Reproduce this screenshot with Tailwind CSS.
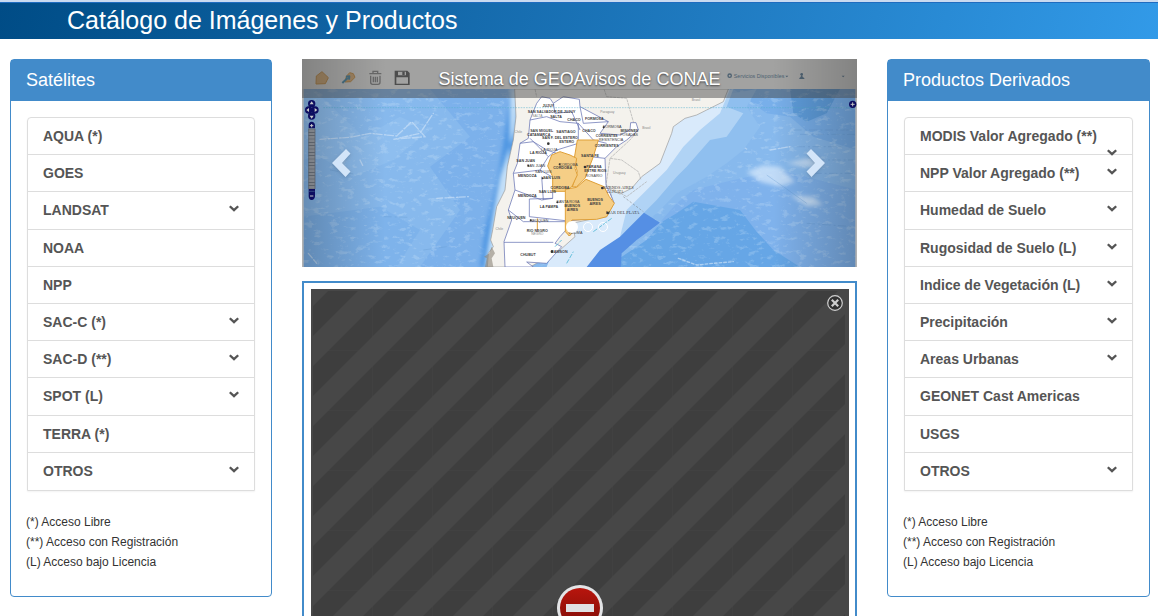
<!DOCTYPE html>
<html lang="es">
<head>
<meta charset="utf-8">
<meta name="viewport" content="width=device-width, initial-scale=1">
<title>Catálogo de Imágenes y Productos</title>
<script src="https://cdn.jsdelivr.net/npm/@tailwindcss/browser@4"></script>
</head>
<body class="h-screen overflow-hidden bg-white font-['Liberation_Sans',Arial,sans-serif] text-[#333]">
<svg class="hidden" aria-hidden="true">
  <symbol id="chev" viewBox="0 0 10 7"><path d="M1.6 0.4 5 3.4 8.4 0.4 10 2 5 6.8 0 2Z" fill="currentColor"/></symbol>
</svg>

<header class="border-t-2 border-[#c9daf0] bg-linear-105 from-[#004c86] to-[#329ae8]">
  <h1 class="border-t border-[#1f6cc0] pb-[2px] pl-[67px] text-[25px] leading-[34px] text-white">Catálogo de Imágenes y Productos</h1>
</header>

<main class="grid grid-cols-[262fr_555fr_263fr] items-start gap-[30px] pt-5 pr-2 pl-[10px]">

  <section class="rounded border border-[#428bca] bg-white">
    <h2 class="bg-[#428bca] px-[15px] pt-[10px] pb-[11px] text-lg leading-5 text-white">Satélites</h2>
    <div class="px-4 pt-4 pb-6">
      <ul class="grid min-h-[374px] auto-rows-fr divide-y divide-[#ddd] rounded-t border border-[#ddd] text-sm font-bold text-[#555] shadow-xs">
        <li class="flex items-center px-[15px]"><a href="#" class="h-[18px] flex-1 leading-[18px]">AQUA (*)</a></li>
        <li class="flex items-center px-[15px]"><a href="#" class="h-[18px] flex-1 leading-[18px]">GOES</a></li>
        <li class="flex items-center px-[15px]"><a href="#" class="h-[18px] flex-1 leading-[18px]">LANDSAT <svg class="float-right mt-1 ml-4 h-[7px] w-[10px]"><use href="#chev"/></svg></a></li>
        <li class="flex items-center px-[15px]"><a href="#" class="h-[18px] flex-1 leading-[18px]">NOAA</a></li>
        <li class="flex items-center px-[15px]"><a href="#" class="h-[18px] flex-1 leading-[18px]">NPP</a></li>
        <li class="flex items-center px-[15px]"><a href="#" class="h-[18px] flex-1 leading-[18px]">SAC-C (*) <svg class="float-right mt-1 ml-4 h-[7px] w-[10px]"><use href="#chev"/></svg></a></li>
        <li class="flex items-center px-[15px]"><a href="#" class="h-[18px] flex-1 leading-[18px]">SAC-D (**) <svg class="float-right mt-1 ml-4 h-[7px] w-[10px]"><use href="#chev"/></svg></a></li>
        <li class="flex items-center px-[15px]"><a href="#" class="h-[18px] flex-1 leading-[18px]">SPOT (L) <svg class="float-right mt-1 ml-4 h-[7px] w-[10px]"><use href="#chev"/></svg></a></li>
        <li class="flex items-center px-[15px]"><a href="#" class="h-[18px] flex-1 leading-[18px]">TERRA (*)</a></li>
        <li class="flex items-center px-[15px]"><a href="#" class="h-[18px] flex-1 leading-[18px]">OTROS <svg class="float-right mt-1 ml-4 h-[7px] w-[10px]"><use href="#chev"/></svg></a></li>
      </ul>
      <div class="-ml-px pt-[21px] text-xs leading-5">
        <p>(*) Acceso Libre</p>
        <p>(**) Acceso con Registración</p>
        <p>(L) Acceso bajo Licencia</p>
      </div>
    </div>
  </section>

  <div class="flex flex-col gap-[14px]">
    <section class="relative" aria-label="Carrusel">
      <svg class="block w-full" viewBox="-534 27 1665 624" font-family="Liberation Sans, Arial, sans-serif">
        <defs>
          <linearGradient id="shL"><stop offset="0" stop-opacity=".24"/><stop offset="1" stop-opacity="0"/></linearGradient>
          <linearGradient id="shR"><stop offset="0" stop-opacity="0"/><stop offset="1" stop-opacity=".24"/></linearGradient>
          <filter id="soft" x="-10%" y="-10%" width="120%" height="120%"><feGaussianBlur stdDeviation="7"/></filter>
          <filter id="rough" x="0" y="0" width="100%" height="100%"><feTurbulence type="fractalNoise" baseFrequency=".04 .07" numOctaves="4" seed="8"/><feColorMatrix values="0 0 0 0 .72  0 0 0 0 .86  0 0 0 0 .98  6 0 0 0 -3.4"/></filter>
        </defs>
        <rect x="-534" y="27" width="1665" height="624" fill="#87b9ed"/>
        <!-- sea depth bands -->
        <path d="M-150 117H160L90 340 30 651H-180L-60 480-150 350-30 260Z" fill="#7cb1eb"/>
        <path d="M-534 500-300 470-180 540-250 651H-534Z" fill="#7eb3eb"/>
        <path d="M-500 117-350 260-240 200-150 240-260 330-380 380-480 320-534 330V117Z" fill="#8ebeef"/>
        <path d="M760 117H1131V300L1000 260 930 200 860 190Z" fill="#78afea"/>
        <path d="M930 117H1080L1040 190 980 215 940 190Z" fill="#5f9edd"/>
        <path d="M440 651 520 540 590 460 640 420 760 390 900 360 1131 420V651Z" fill="#7fb2ec"/>
        <path d="M380 651 500 570 545 516 590 490 640 455 780 480 830 545 880 600 960 651Z" fill="#66a6e6"/>
        <rect x="-534" y="117" width="1665" height="534" filter="url(#rough)" opacity=".22"/>
        <g fill="#cfe4fa" filter="url(#soft)" opacity=".8"><path d="M800 365 850 345 900 350 945 395 900 410 840 395Z"/><path d="M920 340 980 325 1040 345 970 350Z"/><path d="M930 435 1000 440 1030 465 980 470Z"/></g>
        <g fill="none" stroke="#c5def7" stroke-linecap="round" stroke-width="4" opacity=".75">
          <path d="M-480 268-390 262-330 250-250 258-205 215-165 260-260 268-180 250-140 190M-130 445-35 440M770 280 800 297M870 300 930 290M-515 610-490 640M-360 330-350 350" stroke-dasharray="18 7 5 4"/>
          <path d="M595 625 650 645 700 640 760 635" stroke-dasharray="8 6"/>
        </g>
        <g fill="none" stroke="#5d92ca" stroke-width="1.5" opacity=".6"><path d="M940 240H1120M960 253H1125M950 290H1090M1010 330H1120M1000 370H1120M980 520 1120 530M-290 500-210 502M-170 600-100 590M-450 360-380 372" stroke-dasharray="25 9 6 7"/><path d="M860 375 910 410 980 460"/></g>
        <!-- pacific and atlantic shelves -->
        <path d="M95 117 70 280 55 380 40 440 15 540 0 651H70L110 300Z" fill="#4e95e2" filter="url(#soft)"/>
        <path d="M118 117 105 240 60 380 40 490 15 651H90V117Z" fill="#c3dff8" filter="url(#soft)"/>
        <path d="M830 117 800 170 840 230 790 300 740 340 680 380 590 430 530 490 440 560 400 620 330 651H200L300 480 520 250 600 160Z" fill="#8fbfef"/>
        <path d="M760 117 740 170 790 190 740 260 690 270 620 350 590 380 530 450 480 500 440 540 400 600 330 651H200L300 480 520 250 600 160Z" fill="#b0d3f5"/>
        <path d="M750 117 720 190 660 240 610 290 560 360 500 420 440 480 420 560 350 651H200L300 400 560 200Z" fill="#d9eafb"/>
        <path d="M492 488 540 518 470 570 425 610 422 651H320L360 600 420 560Z" fill="#558fe4"/>
        <path d="M430 440 490 485" stroke="#777" stroke-width="1.5" stroke-dasharray="7 5"/>
        <!-- continent -->
        <path d="M104 117 108 200 100 270 82 350 75 420 50 470 38 540 32 570 40 590 25 610 22 651H150L240 600 285 560 275 520 370 500 400 460 392 430 372 410 420 432 455 415 485 380 540 340 575 250 580 230 615 205 650 195 680 180 730 155 745 117Z" fill="#f4f2ed" stroke="#999" stroke-width="2"/>
        <g fill="none" stroke="#aaa" stroke-width="2" stroke-dasharray="9 2"><path d="M372 117 380 140 440 145 460 215 475 240 450 270 390 325 425 330 475 365 483 390M165 117 170 140M390 325 378 405 440 440 500 395"/></g>
        <!-- provinces -->
        <g fill="#fff" stroke="#6672b2" stroke-width="2.2" stroke-linejoin="round">
          <path d="M170 160 185 140 210 145 220 160 250 140 298 148 300 170 385 215 360 250 420 255 450 240 452 218 468 218 475 240 440 270 410 290 375 325 378 405 390 430 402 458 380 500 275 512 280 545 268 558 258 540 240 560 225 580 245 590 200 640 140 636 160 651H75L72 575 95 510 85 480 105 420 100 370 112 340 120 280 145 265 150 210Z"/>
          <path d="M150 210 200 200 240 215 295 220V280L230 300 205 320 150 265M120 280 160 275 200 300 230 310M100 370 180 360 215 380M180 360 205 320M105 420 185 450 218 445V425M148 447V500L256 512M148 447 218 445M85 480 130 515 256 515M72 577H220M220 160 225 190 275 185 300 240M300 170 310 220 385 215M375 325 330 320M295 220 340 270 380 280M185 380 190 450" fill="none"/>
        </g>
        <g fill="#f5ce86" stroke="#e0a037" stroke-width="3" stroke-linejoin="round">
          <path d="M292 270H355L340 320 315 385 290 410 277 411 292 365 282 330Z"/>
          <path d="M215 315 240 305 270 315 290 325 285 355 292 375 275 411 255 424H218V380L203 348Z"/>
          <path d="M256 418 290 412 318 388 372 410 388 440 403 460 380 500 350 508 276 510 262 530 275 550 268 558 256 545Z"/>
          <path d="M172 505V540" fill="none"/>
        </g>
        <g fill="none" stroke="#69c1dc" stroke-width="3"><path d="M340 545 395 505M260 640 280 605M225 590 245 570" stroke-dasharray="14 4"/></g>
        <path d="M-470 173H1131" stroke="#55b1cf" stroke-width="1.5" stroke-dasharray="5 3"/>
        <g fill="#8b8378"><path d="M35 590 45 610 35 625 40 651H15L20 625 12 620 28 610Z" opacity=".6"/></g>
        <g font-size="11" font-weight="bold" fill="#3c3c40" text-anchor="middle">
          <text x="205" y="170">JUJUY</text><text x="215" y="189">SAN SALVADOR DE JUJUY</text><text x="228" y="203">SALTA</text><text x="282" y="213">CHACO</text><text x="343" y="211">FORMOSA</text><text x="327" y="245">CHACO</text><text x="397" y="233" font-weight="normal">FORMOSA</text><text x="448" y="247">MISIONES</text><text x="447" y="258" font-weight="normal">POSADAS</text><text x="380" y="262" font-size="10">CORRIENTES</text><text x="393" y="273" font-weight="normal">RESISTENCIA</text><text x="185" y="246">SAN MIGUEL</text><text x="176" y="257">CATAMARCA</text><text x="258" y="250">SANTIAGO</text><text x="240" y="268">SAN F. DEL ESTERO</text><text x="260" y="280">ESTERO</text><text x="380" y="290">CORRIENTES</text><text x="175" y="313">LA RIOJA</text><text x="208" y="302" font-weight="normal">LA RIOJA</text><text x="330" y="321">SANTA FE</text><text x="137" y="335">SAN JUAN</text><text x="168" y="351" font-weight="normal">SAN JUAN</text><text x="265" y="347" font-weight="normal">CORDOBA</text><text x="248" y="358">CORDOBA</text><text x="342" y="354">PARANA</text><text x="346" y="366">ENTRE RIOS</text><text x="342" y="381" font-weight="normal">ROSARIO</text><text x="142" y="381">MENDOZA</text><text x="190" y="370" font-weight="normal">SAN LUIS</text><text x="215" y="388">SAN LUIS</text><text x="240" y="417">CORDOBA</text><text x="202" y="429">SAN LUIS</text><text x="142" y="441">MENDOZA</text><text x="345" y="453">BUENOS</text><text x="345" y="466">AIRES</text><text x="207" y="474">LA PAMPA</text><text x="264" y="459" font-weight="normal">SANTA ROSA</text><text x="277" y="471">BUENOS</text><text x="277" y="483">AIRES</text><text x="109" y="506">NEUQUEN</text><text x="178" y="516" font-weight="normal">NEUQUEN</text><text x="172" y="545">RIO NEGRO</text><text x="238" y="608">RAWSON</text><text x="286" y="553" font-weight="normal">VIEDMA</text><text x="144" y="619">CHUBUT</text>
          <g font-family="Liberation Serif" font-weight="normal" font-size="13"><text x="415" y="418">BUENOS AIRES</text><text x="405" y="430" font-size="11">LA PLATA</text><text x="428" y="492">MAR DEL PLATA</text></g>
          <g font-weight="normal" fill="#888" font-size="10"><text x="382" y="188">Paraguay</text><text x="499" y="236">Brasil</text><text x="418" y="373">Uruguay</text><text x="115" y="248">Chile</text><text x="58" y="541">Chile</text><text x="648" y="153">Brasil</text><text x="172" y="201">SALTA</text><text x="172" y="556">NEGRO</text></g>
        </g>
        <g fill="#333"><circle cx="205" cy="281" r="4"/><circle cx="371" cy="232" r="3"/><circle cx="145" cy="347" r="3"/><circle cx="239" cy="343" r="3"/><circle cx="315" cy="351" r="4"/><circle cx="188" cy="385" r="3"/><circle cx="367" cy="414" r="4"/><circle cx="232" cy="457" r="3"/><circle cx="152" cy="511" r="3"/><circle cx="216" cy="605" r="4"/><circle cx="383" cy="489" r="4"/></g>
        <!-- application toolbar -->
        <rect x="-534" y="27" width="1665" height="90" fill="#f7f7f5"/>
        <rect x="-534" y="117" width="5" height="534" fill="#e8e8e8"/><rect x="1126" y="117" width="5" height="534" fill="#e8e8e8"/>
        <g stroke-width="3" stroke-linejoin="round">
          <path d="M-492 102-491 78-474 65-455 83-464 101Z" fill="#f0bc79" stroke="#de9a3f"/>
          <path d="M-405 96-401 79-391 68-380 71-375 82-388 95Z" fill="#f0bc79" stroke="#de9a3f"/>
          <path d="m-413 99 16-15M-402 80l10-1-1 10" fill="none" stroke="#4492b8" stroke-width="6"/>
        </g>
        <g fill="none" stroke="#898989" stroke-width="4"><path d="M-332 71h36M-321 70v-6h14v6M-328 77v20q0 6 6 6h16q6 0 6-6V77M-320 80v17M-314 80v17M-308 80v17"/></g>
        <path fill-rule="evenodd" d="M-256 62h38l7 7v36h-45ZM-251 82v19h35V82ZM-246 65v11h24V65Z" fill="#555"/><path d="M-233 65h7v10h-7Z" fill="#555"/>
        <g fill="#557b9a"><circle cx="749" cy="77" r="5" fill="none" stroke="#557b9a" stroke-width="4"/><text x="761" y="83" font-size="16">Servicios Disponibles</text><path d="M916 77h9l-4.500 5ZM1085 77h9l-4.500 5Z"/><circle cx="965" cy="73" r="4"/><path d="M963 76h4l1 5 5 3v3h-15v-3l4-3Z"/></g>
        <!-- map pan and zoom controls -->
        <g fill="#10107a">
          <circle cx="-505" cy="161" r="11"/><circle cx="-505" cy="198" r="11"/><circle cx="-514" cy="180" r="11"/><circle cx="-495" cy="180" r="11"/>
          <path d="M-514 235v-9q0-11 9-11t10 11v9ZM-514 417v22q0 11 9 11t10-11V417Z"/><circle cx="1118" cy="163" r="11"/>
        </g>
        <path d="m-505 154 6 9h-12ZM-505 206l6-9h-12ZM-521 180l8-6v12ZM-488 180l-8-6v12Z" fill="#fff"/>
        <path d="M-510 227h10m-5-5v10M-510 438h10M1112 163h12m-6-6v12" stroke="#fff" stroke-width="3"/><path d="M-513 424h17" stroke="#557bb6" stroke-width="2"/>
        <rect x="-514" y="236" width="19" height="181" fill="#a0a5ac"/><path d="M-505 236V417" stroke="#666e78" stroke-width="19" stroke-dasharray="2 8"/><path d="M-514 236V417M-495 236V417" stroke="#666e78" stroke-width="2"/>
        <!-- side shading and caption strip -->
        <rect x="-534" y="27" width="250" height="624" fill="url(#shL)"/><rect x="881" y="27" width="250" height="624" fill="url(#shR)"/>
        <rect x="-534" y="27" width="1665" height="117" fill="#444" opacity=".48"/>
      </svg>
      <h3 class="absolute inset-x-0 top-0 text-center text-lg leading-10 text-white [text-shadow:0_1px_2px_rgba(0,0,0,0.6)]">Sistema de GEOAvisos de CONAE</h3>
      <button type="button" aria-label="Anterior" class="absolute inset-y-0 left-0 flex w-[15%] items-center justify-center pr-1 pb-px"><svg class="h-7 w-5 text-[#d3e5f9] drop-shadow" viewBox="0 0 20 28"><path d="M14 0 18.500 4.500 10 14 18.500 22.500 13.500 28 0 14Z" fill="currentColor"/></svg></button>
      <button type="button" aria-label="Siguiente" class="absolute inset-y-0 right-0 flex w-[15%] items-center justify-center pb-px"><svg class="h-7 w-5 text-[#d3e5f9] drop-shadow" viewBox="0 0 20 28"><path d="M6 0 1.500 4.500 10 14 1.500 22.500 6.500 28 20 14Z" fill="currentColor"/></svg></button>
      <div class="absolute inset-x-0 bottom-[34px] flex items-center justify-center gap-[5px] pl-[14px]">
        <button type="button" aria-label="Imagen 1" class="size-3 rounded-full bg-white"></button>
        <button type="button" aria-label="Imagen 2" class="size-[10px] rounded-full border border-white"></button>
        <button type="button" aria-label="Imagen 3" class="size-[10px] rounded-full border border-white"></button>
      </div>
    </section>

    <section class="border-2 border-[#428bca] bg-white py-[6px] pr-[6px] pl-[7px]">
      <div class="relative flex min-h-[638px] items-center justify-center bg-[#474747] p-[2px]">
        <svg class="absolute inset-y-[2px] right-1 left-[2px] h-[634px] w-[calc(100%-6px)]" aria-hidden="true">
          <defs><pattern id="stripes" width="60" height="60" patternUnits="userSpaceOnUse"><rect width="60" height="60" fill="#474747"/><path d="M15 0H45L0 45V15ZM60 15V45L45 60H15Z" fill="#3e3e3e"/><path d="M0 59.500H60M59.500 0V60" stroke="#474747" stroke-opacity=".35"/></pattern></defs>
          <rect width="100%" height="100%" fill="url(#stripes)"/>
        </svg>
        <svg class="relative size-[46px]" viewBox="0 0 46 46" role="img" aria-label="Contenido bloqueado">
          <defs><linearGradient id="stop" x2="0" y2="1"><stop stop-color="#b8150d"/><stop offset="1" stop-color="#7d0d08"/></linearGradient></defs>
          <circle cx="23" cy="23" r="23" fill="#e3e4e6"/><circle cx="23" cy="23" r="20" fill="url(#stop)"/><rect x="9" y="19" width="28" height="8" fill="#e0e1e4"/>
        </svg>
        <button type="button" aria-label="Cerrar" class="absolute top-[6px] right-[6px]"><svg class="block size-4" viewBox="0 0 16 16"><circle cx="8" cy="8" r="7.300" fill="#333" stroke="#d0d0d0" stroke-width="1.200"/><path d="m4.800 4.800 6.400 6.400m0-6.400-6.400 6.400" stroke="#d0d0d0" stroke-width="2.200"/></svg></button>
      </div>
    </section>
  </div>

  <section class="rounded border border-[#428bca] bg-white">
    <h2 class="bg-[#428bca] px-[15px] pt-[10px] pb-[11px] text-lg leading-5 text-white">Productos Derivados</h2>
    <div class="px-4 pt-4 pb-6">
      <ul class="grid min-h-[374px] auto-rows-fr divide-y divide-[#ddd] rounded-t border border-[#ddd] text-sm font-bold text-[#555] shadow-xs">
        <li class="flex items-center px-[15px]"><a href="#" class="h-[18px] flex-1 leading-[18px]">MODIS Valor Agregado (**) <svg class="float-right mt-1 ml-4 h-[7px] w-[10px]"><use href="#chev"/></svg></a></li>
        <li class="flex items-center px-[15px]"><a href="#" class="h-[18px] flex-1 leading-[18px]">NPP Valor Agregado (**) <svg class="float-right mt-1 ml-4 h-[7px] w-[10px]"><use href="#chev"/></svg></a></li>
        <li class="flex items-center px-[15px]"><a href="#" class="h-[18px] flex-1 leading-[18px]">Humedad de Suelo <svg class="float-right mt-1 ml-4 h-[7px] w-[10px]"><use href="#chev"/></svg></a></li>
        <li class="flex items-center px-[15px]"><a href="#" class="h-[18px] flex-1 leading-[18px]">Rugosidad de Suelo (L) <svg class="float-right mt-1 ml-4 h-[7px] w-[10px]"><use href="#chev"/></svg></a></li>
        <li class="flex items-center px-[15px]"><a href="#" class="h-[18px] flex-1 leading-[18px]">Indice de Vegetación (L) <svg class="float-right mt-1 ml-4 h-[7px] w-[10px]"><use href="#chev"/></svg></a></li>
        <li class="flex items-center px-[15px]"><a href="#" class="h-[18px] flex-1 leading-[18px]">Precipitación <svg class="float-right mt-1 ml-4 h-[7px] w-[10px]"><use href="#chev"/></svg></a></li>
        <li class="flex items-center px-[15px]"><a href="#" class="h-[18px] flex-1 leading-[18px]">Areas Urbanas <svg class="float-right mt-1 ml-4 h-[7px] w-[10px]"><use href="#chev"/></svg></a></li>
        <li class="flex items-center px-[15px]"><a href="#" class="h-[18px] flex-1 leading-[18px]">GEONET Cast Americas</a></li>
        <li class="flex items-center px-[15px]"><a href="#" class="h-[18px] flex-1 leading-[18px]">USGS</a></li>
        <li class="flex items-center px-[15px]"><a href="#" class="h-[18px] flex-1 leading-[18px]">OTROS <svg class="float-right mt-1 ml-4 h-[7px] w-[10px]"><use href="#chev"/></svg></a></li>
      </ul>
      <div class="-ml-px pt-[21px] text-xs leading-5">
        <p>(*) Acceso Libre</p>
        <p>(**) Acceso con Registración</p>
        <p>(L) Acceso bajo Licencia</p>
      </div>
    </div>
  </section>
</main>
</body>
</html>
